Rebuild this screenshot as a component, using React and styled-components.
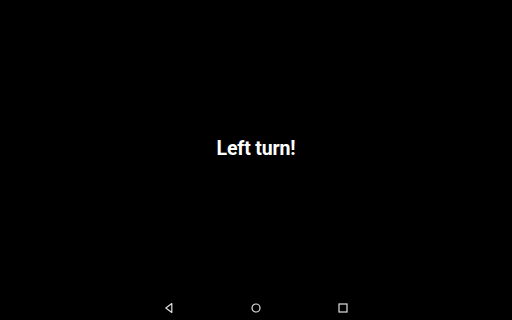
import React from 'react';
import styled, { createGlobalStyle } from 'styled-components';

const GlobalStyle = createGlobalStyle`
  html, body, #root {
    margin: 0;
    padding: 0;
    height: 100%;
    background: #000;
  }
  body {
    font-family: Roboto, "Liberation Sans", sans-serif;
  }
`;

const Screen = styled.div`
  height: 100vh;
  display: flex;
  flex-direction: column;
  background: #000;
`;

const Content = styled.main`
  flex: 1;
  display: flex;
  align-items: center;
  justify-content: center;
`;

const Message = styled.h1`
  margin: 0;
  color: #fff;
  font-size: 19.5px;
  font-weight: 700;
  letter-spacing: -0.15px;
`;

const NavBar = styled.nav`
  height: 24px;
  display: flex;
  align-items: center;
  justify-content: center;
`;

const NavButton = styled.button`
  width: 87px;
  height: 24px;
  padding: 0;
  border: none;
  background: transparent;
  display: flex;
  align-items: center;
  justify-content: center;
  color: #e0e0e0;
`;

const Icon = ({ children }) => (
  <svg width="10" height="10" viewBox="0 0 10 10" fill="none" stroke="currentColor" strokeWidth="1.2">
    {children}
  </svg>
);

export default function App() {
  return (
    <>
      <GlobalStyle />
      <Screen>
        <Content>
          <Message>Left turn!</Message>
        </Content>
        <NavBar>
          <NavButton aria-label="Back">
            <Icon>
              <polygon points="7.8,0.6 7.8,9.4 1.8,5" strokeLinejoin="round" />
            </Icon>
          </NavButton>
          <NavButton aria-label="Home">
            <Icon>
              <circle cx="5" cy="5" r="4" />
            </Icon>
          </NavButton>
          <NavButton aria-label="Recents">
            <Icon>
              <rect x="1" y="1" width="8" height="8" />
            </Icon>
          </NavButton>
        </NavBar>
      </Screen>
    </>
  );
}
